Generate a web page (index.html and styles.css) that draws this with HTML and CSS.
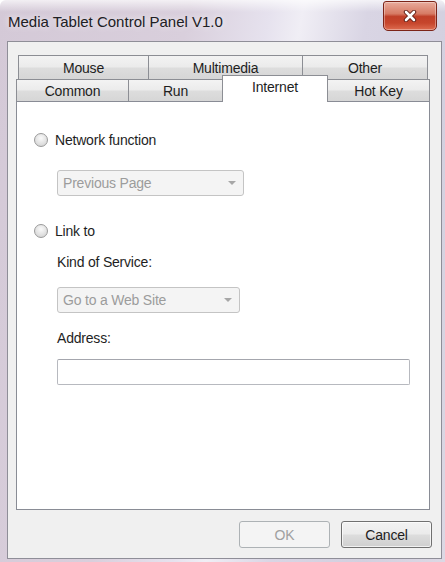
FILE: index.html
```html
<!DOCTYPE html>
<html lang="en">
<head>
    <meta charset="UTF-8">
    <title>Media Tablet Control Panel V1.0</title>
    <link rel="stylesheet" href="styles.css">
</head>
<body>
<div class="window">
    <div class="titlebar">
        <span class="title">Media Tablet Control Panel V1.0</span>
        <span class="close">
            <svg width="14" height="12" viewBox="0 0 14 12">
                <path d="M3 2 L11 10 M11 2 L3 10" stroke="#5a1a12" stroke-width="4.4" stroke-linecap="round"/>
                <path d="M3 2 L11 10 M11 2 L3 10" stroke="#ffffff" stroke-width="2.6" stroke-linecap="round"/>
            </svg>
        </span>
    </div>

    <div class="client">
        <div class="tabs">
            <div class="tab-row back">
                <div class="tab mouse">Mouse</div>
                <div class="tab multimedia">Multimedia</div>
                <div class="tab other">Other</div>
            </div>
            <div class="tab-row front">
                <div class="tab common">Common</div>
                <div class="tab run">Run</div>
                <div class="tab internet active">Internet</div>
                <div class="tab hotkey">Hot Key</div>
            </div>
        </div>

        <div class="panel">
            <label class="option first">
                <span class="radio"></span>
                <span>Network function</span>
            </label>
            <div class="select disabled wide">
                <span>Previous Page</span>
                <span class="arrow"></span>
            </div>

            <label class="option link">
                <span class="radio"></span>
                <span>Link to</span>
            </label>
            <div class="field-label kind">Kind of Service:</div>
            <div class="select disabled narrow">
                <span>Go to a Web Site</span>
                <span class="arrow"></span>
            </div>
            <div class="field-label address">Address:</div>
            <div class="text-input"></div>
        </div>

        <div class="buttons">
            <div class="button disabled">OK</div>
            <div class="button">Cancel</div>
        </div>
    </div>
</div>
</body>
</html>
```

FILE: styles.css
```css
html, body {
    margin: 0;
    padding: 0;
    background: #ffffff;
}
body {
    font: normal 14px/20px "Liberation Sans", Arial, sans-serif;
    letter-spacing: -0.2px;
    color: #1e1e1e;
}
.window {
    width: 445px;
    height: 562px;
    box-sizing: border-box;
    display: flex;
    flex-direction: column;
    border-radius: 6px 6px 0 0;
    background:
        linear-gradient(180deg, rgba(255,255,255,.7) 0, rgba(255,255,255,0) 12px),
        linear-gradient(100deg, #d4c9d7 0%, #d9cfdc 35%, #e6e2ee 50%, #f0eef5 56%, #d9d5e4 68%, #d3d0df 85%, #dcd8e4 100%);
}

/* title bar */
.titlebar {
    height: 41px;
    flex: none;
    display: flex;
    justify-content: space-between;
    align-items: flex-start;
    padding: 0 8px 0 8px;
}
.title {
    margin-top: 13px;
    font: normal 15px/18px "Liberation Sans", Arial, sans-serif;
    letter-spacing: 0;
    color: #202024;
    text-shadow: 0 0 6px rgba(255,255,255,.9);
}
.close {
    margin-top: 1px;
    width: 54px;
    height: 30px;
    box-sizing: border-box;
    display: flex;
    align-items: center;
    justify-content: center;
    border: 1px solid #7c2418;
    border-radius: 3px 3px 5px 5px;
    background: linear-gradient(180deg, #e9ab9c 0%, #d67a64 42%, #c03f28 52%, #c6452c 75%, #dd6c50 100%);
    box-shadow: inset 0 0 0 1px rgba(255,255,255,.35);
}

/* client area */
.client {
    flex: 1;
    margin: 0 3px 3px 7px;
    padding: 13px 11px 0 8px;
    border: 1px solid #8f8e98;
    background: #f0f0f0;
    display: flex;
    flex-direction: column;
}

/* tabs */
.tab-row {
    display: flex;
}
.tab-row.back {
    margin-left: 2px;
    height: 24px;
}
.tab-row.front {
    height: 22px;
    align-items: flex-end;
}
.tab {
    box-sizing: border-box;
    height: 100%;
    border: 1px solid #8c8e94;
    border-bottom: none;
    margin-left: -1px;
    text-align: center;
    font-size: 14px;
    line-height: 22px;
    background: linear-gradient(180deg, #f3f3f3 0%, #ebebeb 48%, #dddddd 52%, #d6d6d6 100%);
}
.tab:first-child {
    margin-left: 0;
}
.tab-row.back .tab {
    line-height: 24px;
}
.mouse { width: 131px; }
.multimedia { width: 155px; }
.other { width: 126px; }
.common { width: 113px; }
.run { width: 95px; }
.internet { width: 106px; }
.hotkey { width: 103px; }
.tab.active {
    position: relative;
    z-index: 1;
    height: 27px;
    margin-bottom: -1px;
    background: #ffffff;
    line-height: 22px;
}

/* panel */
.panel {
    height: 409px;
    box-sizing: border-box;
    border: 1px solid #898c95;
    background: #ffffff;
    padding: 28px 0 0 17px;
    display: flex;
    flex-direction: column;
    align-items: flex-start;
}
.option {
    display: flex;
    align-items: center;
    height: 20px;
}
.option.link {
    margin-top: 25px;
}
.radio {
    width: 14px;
    height: 14px;
    box-sizing: border-box;
    margin-right: 7px;
    border-radius: 50%;
    border: 1px solid #9a9a9a;
    background: radial-gradient(circle at 50% 35%, #fafafa 0%, #e2e2e2 55%, #cdcdcd 100%);
}
.field-label {
    margin-left: 23px;
    height: 20px;
}
.field-label.kind {
    margin-top: 11px;
}
.field-label.address {
    margin-top: 15px;
}
.select {
    margin-left: 23px;
    height: 26px;
    box-sizing: border-box;
    display: flex;
    align-items: center;
    padding: 0 7px 0 5px;
    border: 1px solid #c4c4c4;
    border-radius: 3px;
    background: #f4f4f4;
}
.select.wide {
    width: 187px;
    margin-top: 20px;
}
.select.narrow {
    width: 183px;
    margin-top: 15px;
}
.select.disabled {
    color: #9c9c9c;
}
.arrow {
    margin-left: auto;
    width: 0;
    height: 0;
    border-left: 4px solid transparent;
    border-right: 4px solid transparent;
    border-top: 4px solid #a7a7a7;
}
.text-input {
    margin: 11px 0 0 23px;
    width: 353px;
    height: 26px;
    box-sizing: border-box;
    border: 1px solid #b7b9bf;
    border-top-color: #a4a6ad;
    border-radius: 2px;
    background: #ffffff;
}

/* buttons */
.buttons {
    display: flex;
    justify-content: flex-end;
    gap: 11px;
    margin: 11px -2px 0 0;
}
.button {
    width: 91px;
    height: 27px;
    box-sizing: border-box;
    display: flex;
    align-items: center;
    justify-content: center;
    border: 1px solid #707070;
    border-radius: 3px;
    background: linear-gradient(180deg, #f2f2f2 0%, #ebebeb 48%, #dddddd 52%, #cfcfcf 100%);
    box-shadow: inset 0 0 0 1px rgba(255,255,255,.7);
    font-size: 14px;
}
.button.disabled {
    border-color: #adb2b5;
    background: #f4f4f4;
    box-shadow: none;
    color: #a0a0a0;
}
```
